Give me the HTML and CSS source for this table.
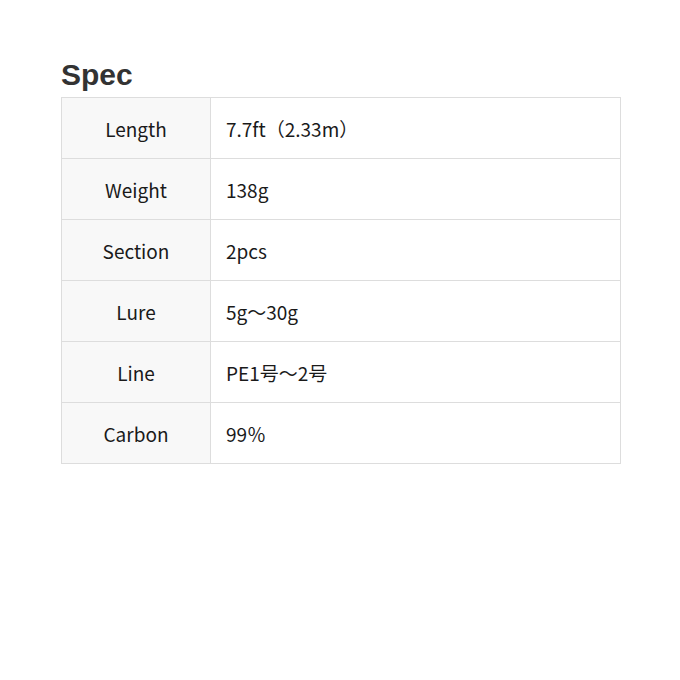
FILE: index.html
```html
<!DOCTYPE html>
<html lang="ja">
<head>
<meta charset="utf-8">
<link rel="stylesheet" href="styles.css">
</head>
<body>
<section class="spec">
  <h2 class="spec-title">Spec</h2>
  <table class="spec-table">
    <tr><th>Length</th><td>7.7ft（2.33m）</td></tr>
    <tr><th>Weight</th><td>138g</td></tr>
    <tr><th>Section</th><td>2pcs</td></tr>
    <tr><th>Lure</th><td>5g～30g</td></tr>
    <tr><th>Line</th><td>PE1号～2号</td></tr>
    <tr><th>Carbon</th><td>99％</td></tr>
  </table>
</section>
</body>
</html>
```

FILE: styles.css
```css
html, body {
  margin: 0;
  padding: 0;
  background: #fff;
}
.spec {
  padding: 58px 0 0 61px;
  width: 560px;
}
.spec-title {
  margin: 0 0 5px 0;
  font-family: "Liberation Sans", Arial, sans-serif;
  font-weight: bold;
  font-size: 30px;
  line-height: 34px;
  color: #333;
}
.spec-table {
  width: 560px;
  border-collapse: collapse;
  font-family: "Noto Sans CJK JP", "Noto Sans", sans-serif;
  font-size: 19px;
  color: #1a1a1a;
}
.spec-table th,
.spec-table td {
  border: 1px solid #ddd;
  height: 61px;
  padding: 0 15px;
  box-sizing: border-box;
  font-weight: normal;
}
.spec-table th {
  width: 149px;
  background: #f8f8f8;
  text-align: center;
}
.spec-table td {
  text-align: left;
}
```
